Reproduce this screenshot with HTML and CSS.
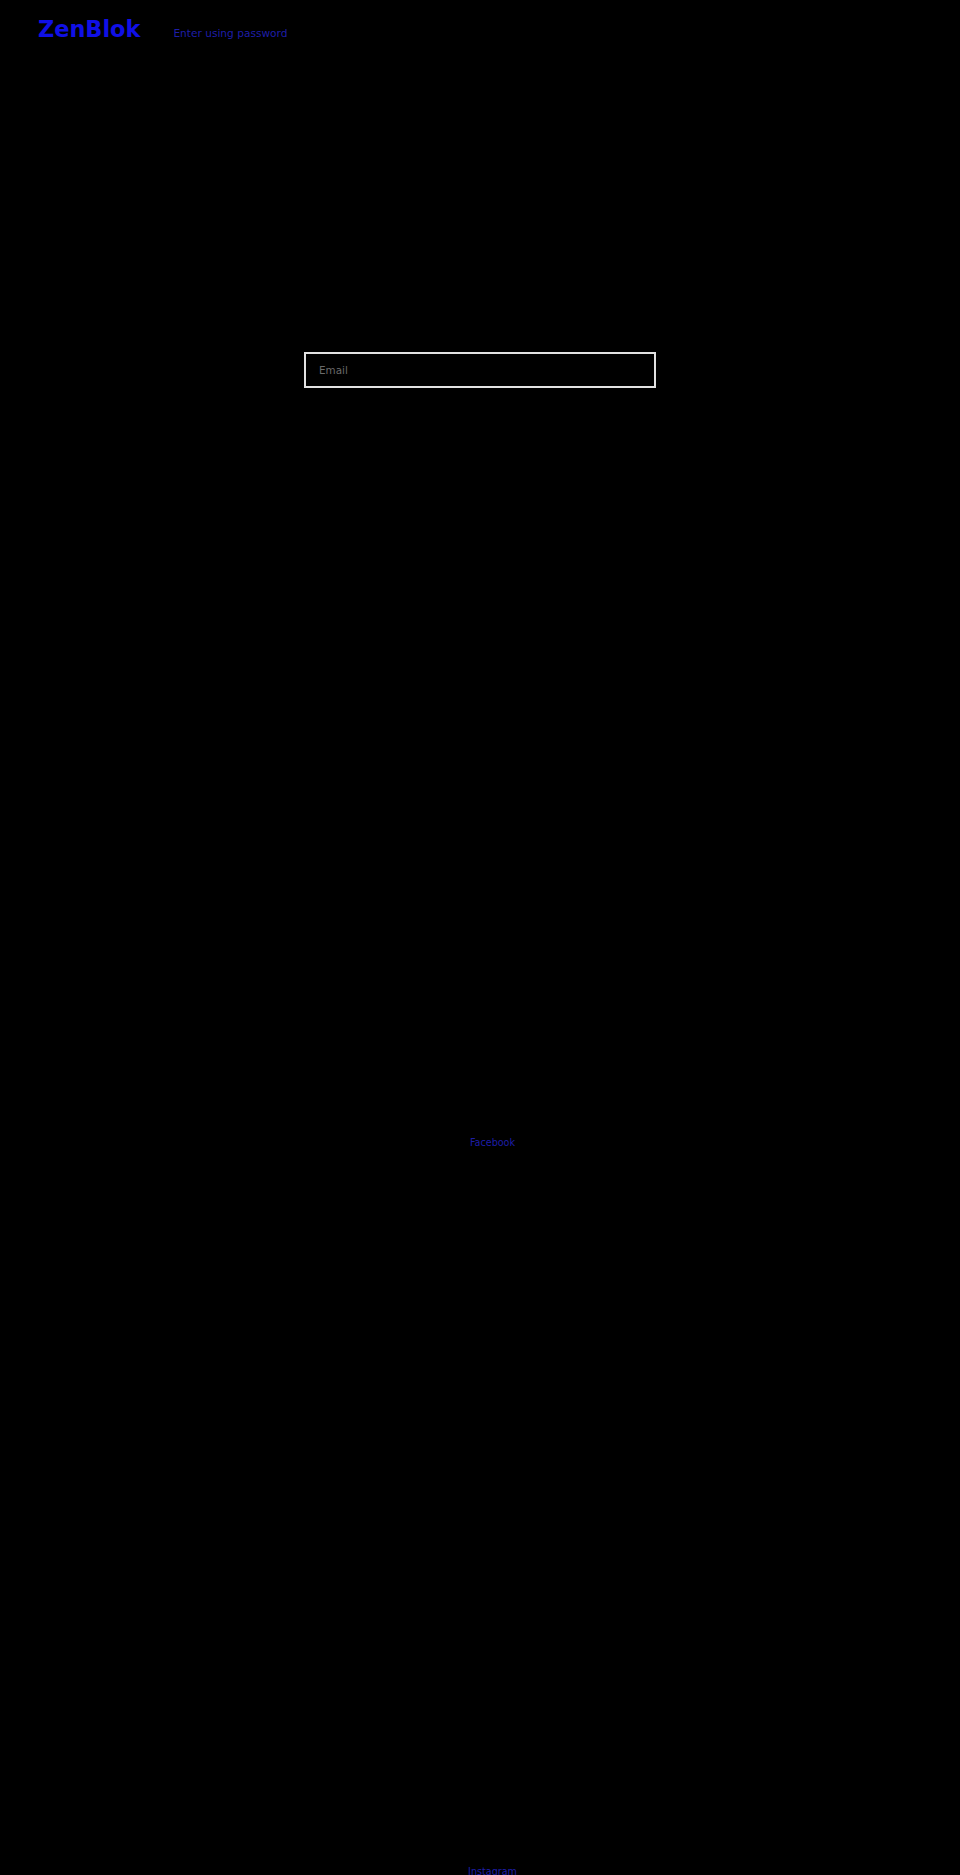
FILE: index.html
```html
<!DOCTYPE html>
<html lang="en">
<head>
<meta charset="utf-8">
<title>ZenBlok</title>
<link rel="stylesheet" href="styles.css">
</head>
<body>
<header class="header">
  <a class="logo" href="#">ZenBlok</a>
  <a class="password-link" href="#">Enter using password</a>
</header>
<main class="main">
  <form class="signup">
    <input class="email" type="email" placeholder="Email">
  </form>
</main>
<footer class="footer">
  <ul class="social">
    <li class="social-item social-item--facebook"><a class="social-link" href="#">Facebook</a></li>
    <li class="social-item social-item--instagram"><a class="social-link" href="#">Instagram</a></li>
  </ul>
</footer>
</body>
</html>
```

FILE: styles.css
```css
html, body {
  margin: 0;
  padding: 0;
  background: #000;
}

body {
  font-family: "DejaVu Sans", "Liberation Sans", sans-serif;
}

a {
  text-decoration: none;
}

.header {
  display: flex;
  align-items: baseline;
  gap: 33px;
  padding: 14px 0 0 38px;
}

.logo {
  font-size: 22.4px;
  font-weight: bold;
  line-height: 30px;
  color: #1010e6;
}

.password-link {
  font-size: 10.6px;
  line-height: 14px;
  color: #1e1ea8;
}

.main {
  display: flex;
  justify-content: center;
  padding-top: 308px;
}

.signup {
  margin: 0;
}

.email {
  display: block;
  box-sizing: border-box;
  width: 352px;
  height: 36px;
  margin: 0;
  padding: 0 13px;
  border: 2px solid #e2e2e2;
  border-radius: 0;
  background: #000;
  color: #ccc;
  font-family: "DejaVu Sans", "Liberation Sans", sans-serif;
  font-size: 10.4px;
  outline: none;
}

.email::placeholder {
  color: #6a6a6a;
}

.footer {
  padding-top: 749px;
}

.social {
  list-style: none;
  margin: 0;
  padding: 0;
  text-align: center;
}

.social-item {
  font-size: 9.6px;
  line-height: 12px;
}

.social-item--instagram {
  margin-top: 717px;
}

.social-link {
  display: inline-block;
  padding-left: 25px;
  color: #1e1ea8;
}
```
